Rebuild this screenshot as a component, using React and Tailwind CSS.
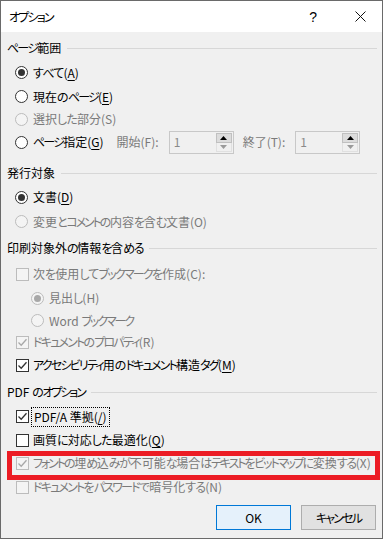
import React from "react";

const FONT = "font-['Noto_Sans_CJK_JP','Noto_Sans',sans-serif] [font-feature-settings:'palt']";

function kind(ch) {
  const c = ch.charCodeAt(0);
  if (c >= 0x30a0 && c <= 0x30ff) return "k";
  if (c >= 0x3040 && c <= 0x309f) return "h";
  return "o";
}

function T({ s, tight }) {
  const runs = [];
  for (const ch of s) {
    const k = kind(ch);
    if (runs.length && runs[runs.length - 1].k === k) runs[runs.length - 1].t += ch;
    else runs.push({ k, t: ch });
  }
  const kc = tight ? "tracking-[-2.1px]" : "tracking-[-1.8px]";
  const hc = tight ? "tracking-[-1.3px]" : "tracking-[-0.8px]";
  return runs.map((r, i) => {
    if (r.k === "k") return <span key={i} className={kc}>{r.t}</span>;
    if (r.k === "h") return <span key={i} className={hc}>{r.t}</span>;
    return <span key={i}>{r.t}</span>;
  });
}

function U({ children }) {
  return <span className="underline underline-offset-[2px] decoration-[1px]">{children}</span>;
}

function Radio({ checked, disabled }) {
  const border = disabled ? "border-[#bcbcbc] bg-[#f4f4f4]" : "border-[#333333] bg-white";
  const dot = disabled ? "bg-[#a8a8a8]" : "bg-[#333333]";
  return (
    <span className={`box-border w-[13px] h-[13px] rounded-full border flex items-center justify-center shrink-0 ${border}`}>
      {checked && <span className={`w-[7px] h-[7px] rounded-full ${dot}`} />}
    </span>
  );
}

function Check({ checked, disabled }) {
  const border = disabled ? "border-[#bcbcbc] bg-[#f4f4f4]" : "border-[#333333] bg-white";
  const stroke = disabled ? "#a8a8a8" : "#333333";
  return (
    <span className={`box-border w-[13px] h-[13px] border flex items-center justify-center shrink-0 ${border}`}>
      {checked && (
        <svg width="11" height="11" viewBox="0 0 11 11">
          <path d="M1.5 5.5 L4.2 8.2 L9.5 2.2" fill="none" stroke={stroke} strokeWidth="1.3" />
        </svg>
      )}
    </span>
  );
}

function Header({ children, className = "" }) {
  return (
    <div className={`flex items-center h-[24px] pl-[6px] pr-[5px] ${className}`}>
      <span className="text-black whitespace-nowrap">{children}</span>
      <span className="flex-1 h-px bg-[#d7d7d7] ml-[6px]" />
    </div>
  );
}

function RadioRow({ h, checked, disabled, indent, children, className = "" }) {
  return (
    <div className={`flex items-center ${h} ${indent ? "pl-[30px]" : "pl-[14px]"} ${className}`}>
      <Radio checked={checked} disabled={disabled} />
      <span className={`ml-[5px] whitespace-nowrap ${disabled ? "text-[#7a7a7a]" : "text-black"}`}>{children}</span>
    </div>
  );
}

function CheckRow({ h, checked, disabled, children, className = "", focus }) {
  return (
    <div className={`flex items-center ${h} pl-[15px] ${className}`}>
      <Check checked={checked} disabled={disabled} />
      {focus ? (
        <span className="ml-[2px] px-[2px] py-[1px] border border-dotted border-black whitespace-nowrap text-black leading-[16px]">
          {children}
        </span>
      ) : (
        <span className={`ml-[4px] whitespace-nowrap ${disabled ? "text-[#7a7a7a]" : "text-black"}`}>{children}</span>
      )}
    </div>
  );
}

function Spin() {
  return (
    <div className="box-border w-[65px] h-[23px] border border-[#c8c8c8] bg-[#f0f0f0] flex">
      <div className="flex-1 flex items-center pl-[4px] text-[#8a8a8a]">1</div>
      <div className="w-[17px] flex flex-col py-[1px] pr-[1px]">
        <div className="flex-1 bg-[#dcdcdc] border border-[#c0c0c0] flex items-center justify-center">
          <svg width="7" height="4" viewBox="0 0 7 4"><path d="M0 4 L3.5 0 L7 4 Z" fill="#000" /></svg>
        </div>
        <div className="flex-1 bg-[#f0f0f0] border border-[#e0e0e0] border-t-0 flex items-center justify-center">
          <svg width="7" height="4" viewBox="0 0 7 4"><path d="M0 0 L3.5 4 L7 0 Z" fill="#9a9a9a" /></svg>
        </div>
      </div>
    </div>
  );
}

export default function App() {
  return (
    <div className={`${FONT} text-[12px] leading-none bg-white w-[385px] h-[540px]`}>
      <div className="box-border w-[383px] h-[539px] border border-[#6a6a6a] flex flex-col">
        <div className="h-[31px] bg-white flex items-center shrink-0">
          <span className="ml-[8px] text-black"><T s="オプション" /></span>
          <span className="ml-auto text-[14px] text-black font-['Liberation_Sans',sans-serif] mr-[38px]">?</span>
          <svg className="mr-[16px]" width="11" height="11" viewBox="0 0 11 11">
            <path d="M0.5 0.5 L10.5 10.5 M10.5 0.5 L0.5 10.5" stroke="#111" strokeWidth="1" />
          </svg>
        </div>
        <div className="flex-1 bg-[#f0f0f0] flex flex-col pt-[4px]">
          <Header><T s="ページ範囲" /></Header>
          <RadioRow h="h-[25px]" checked><T s="すべて(" /><U>A</U>)</RadioRow>
          <RadioRow h="h-[23px]"><T s="現在のページ(" /><U>E</U>)</RadioRow>
          <RadioRow h="h-[22px]" disabled><T s="選択した部分(S)" /></RadioRow>
          <div className="flex items-center h-[24px] pl-[14px]">
            <Radio />
            <span className="ml-[5px] whitespace-nowrap text-black"><T s="ページ指定(" /><U>G</U>)</span>
            <span className="ml-[13px] text-[#7a7a7a] whitespace-nowrap">開始(F):</span>
            <div className="ml-[10px]"><Spin /></div>
            <span className="ml-[9px] text-[#7a7a7a] whitespace-nowrap">終了(T):</span>
            <div className="ml-[10px]"><Spin /></div>
          </div>
          <Header className="mt-[7px]">発行対象</Header>
          <RadioRow h="h-[24px]" checked>文書(<U>D</U>)</RadioRow>
          <RadioRow h="h-[25px]" disabled><T s="変更とコメントの内容を含む文書(O)" tight /></RadioRow>
          <Header className="mt-[2px]"><T s="印刷対象外の情報を含める" tight /></Header>
          <CheckRow h="h-[24px]" className="mt-[2px]" disabled><T s="次を使用してブックマークを作成(C):" /></CheckRow>
          <RadioRow h="h-[24px]" indent checked disabled><T s="見出し(H)" /></RadioRow>
          <RadioRow h="h-[21px]" indent disabled><T s="Word ブックマーク" tight /></RadioRow>
          <CheckRow h="h-[22px]" checked disabled><T s="ドキュメントのプロパティ(R)" /></CheckRow>
          <CheckRow h="h-[24px]" checked><T s="アクセシビリティ用のドキュメント構造タグ(" /><U>M</U>)</CheckRow>
          <Header className="mt-[3px]"><T s="PDF のオプション" tight /></Header>
          <CheckRow h="h-[25px]" checked focus><T s="PDF/A 準拠(" /><U>/</U>)</CheckRow>
          <CheckRow h="h-[22px]"><T s="画質に対応した最適化(" /><U>Q</U>)</CheckRow>
          <div className="relative">
            <CheckRow h="h-[24px]" checked disabled><T s="フォントの埋め込みが不可能な場合はテキストをビットマップに変換する(X)" tight /></CheckRow>
            <div className="absolute left-[6px] top-0 w-[373px] h-[29px] box-border border-[5px] border-[#ec1c24]" />
          </div>
          <CheckRow h="h-[24px]" disabled><T s="ドキュメントをパスワードで暗号化する(N)" /></CheckRow>
          <div className="flex justify-end gap-[10px] pr-[6px] mt-[6px]">
            <button className="box-border w-[75px] h-[25px] border border-[#0078d7] bg-[#e5f1fb] text-black flex items-center justify-center">OK</button>
            <button className="box-border w-[75px] h-[25px] border border-[#adadad] bg-[#e1e1e1] text-black flex items-center justify-center"><T s="キャンセル" /></button>
          </div>
        </div>
      </div>
    </div>
  );
}
